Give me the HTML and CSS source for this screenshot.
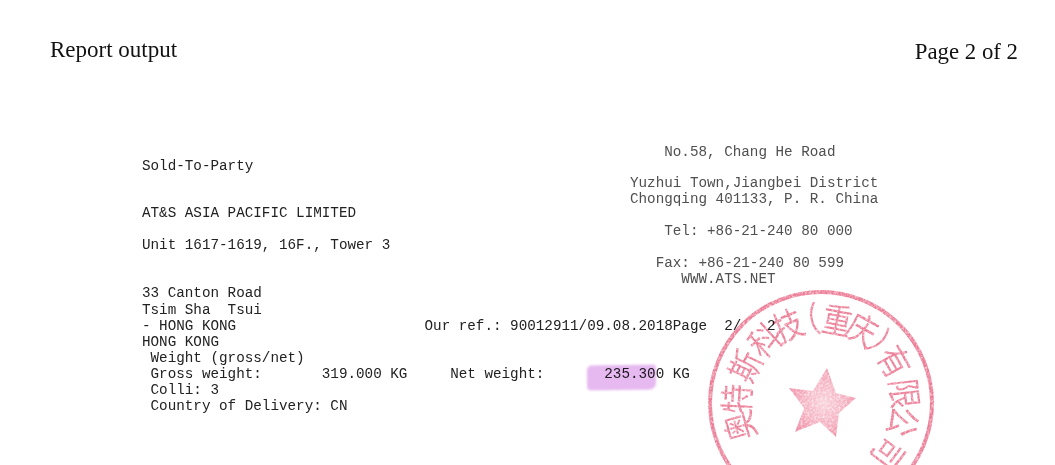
FILE: index.html
```html
<!DOCTYPE html>
<html lang="en">
<head>
<meta charset="utf-8">
<title>Report output</title>
<link rel="stylesheet" href="styles.css">
</head>
<body>
<header class="page-head">
  <h1 class="title">Report output</h1>
  <div class="page-no">Page 2 of 2</div>
</header>
<main class="sheet">
  <div class="letter-top">
    <pre class="mono sender">

Sold-To-Party


AT&amp;S ASIA PACIFIC LIMITED

Unit 1617-1619, 16F., Tower 3</pre>
    <pre class="mono address">    No.58, Chang He Road

Yuzhui Town,Jiangbei District
Chongqing 401133, P. R. China

    Tel: +86-21-240 80 000

   Fax: +86-21-240 80 599
      WWW.ATS.NET</pre>
  </div>
  <pre class="mono details">33 Canton Road
Tsim Sha  Tsui
- HONG KONG                      Our ref.: 90012911/09.08.2018Page  2/   2
HONG KONG
 Weight (gross/net)
 Gross weight:       319.000 KG     Net weight:       <span class="marked">235.300</span> KG
 Colli: 3
 Country of Delivery: CN</pre>
  <svg class="stamp" viewBox="0 0 240 182" width="240" height="182" aria-hidden="true">
    <defs>
      <radialGradient id="starFill" cx="0.52" cy="0.5" r="0.55">
        <stop offset="0" stop-color="#f9d3dc"/>
        <stop offset="0.55" stop-color="#f5b4c3"/>
        <stop offset="1" stop-color="#ef8ea6"/>
      </radialGradient>
      <filter id="ink" x="-5%" y="-5%" width="110%" height="110%">
        <feTurbulence type="fractalNoise" baseFrequency="0.45" numOctaves="2" seed="4" result="noise"/>
        <feColorMatrix in="noise" type="matrix" values="0 0 0 0 1  0 0 0 0 1  0 0 0 0 1  1.5 0 0 0 -0.6" result="specks"/>
        <feComposite in="SourceGraphic" in2="specks" operator="out" result="worn"/>
        <feGaussianBlur in="worn" stdDeviation="0.55"/>
      </filter>
    </defs>
    <g filter="url(#ink)">
      <circle class="ring" cx="120" cy="120" r="111"/>
      <polygon class="star" points="126,85 135,110 155,115 138,130 135,154 119,139 94,149 103,125 88,105 112,108"/>
      <g class="stamp-text">
        <text transform="rotate(-106 120 120) translate(120 49) scale(.85 1)">奥</text>
        <text transform="rotate(-87 120 120) translate(120 49) scale(.85 1)">特</text>
        <text transform="rotate(-64 120 120) translate(120 49) scale(.85 1)">斯</text>
        <text transform="rotate(-42 120 120) translate(120 49) scale(.85 1)">科</text>
        <text transform="rotate(-23 120 120) translate(120 49) scale(.85 1)">技</text>
        <text transform="rotate(-11 120 120) translate(120 49) scale(.85 1)">（</text>
        <text transform="rotate(11 120 120) translate(120 49) scale(.85 1)">重</text>
        <text transform="rotate(29 120 120) translate(120 49) scale(.85 1)">庆</text>
        <text transform="rotate(49 120 120) translate(120 49) scale(.85 1)">）</text>
        <text transform="rotate(60.500 120 120) translate(120 49) scale(.85 1)">有</text>
        <text transform="rotate(83.500 120 120) translate(120 49) scale(.85 1)">限</text>
        <text transform="rotate(103 120 120) translate(120 49) scale(.85 1)">公</text>
        <text transform="rotate(127 120 120) translate(120 49) scale(.85 1)">司</text>
      </g>
    </g>
  </svg>
</main>
</body>
</html>
```
FILE: styles.css
```css
html, body {
  margin: 0;
  height: 465px;
  overflow: hidden;
  background: #fff;
}

.page-head {
  display: flex;
  justify-content: space-between;
  align-items: flex-start;
  padding: 36px 37px 0 50px;
  height: 107px;
  box-sizing: border-box;
  font-family: "Liberation Serif", "Times New Roman", serif;
  font-size: 23px;
  line-height: 27px;
  color: #111;
  filter: blur(0.3px);
}

.title {
  margin: 0;
  font: inherit;
}

.page-no {
  padding-top: 2px;
  font-size: 22.8px;
}

.sheet {
  position: relative;
  height: 322px;
  box-sizing: border-box;
  padding: 36px 0 0 142px;
}

.mono {
  margin: 0;
  font-family: "Liberation Mono", "Courier New", monospace;
  font-size: 14.28px;
  color: #222;
  filter: blur(0.35px);
}

.letter-top {
  display: flex;
  height: 142.4px;
}

.sender {
  width: 488px;
  line-height: 15.8px;
}

.address {
  padding-top: 1.5px;
  line-height: 15.9px;
  color: #505050;
}

.details {
  line-height: 16.15px;
}

.marked {
  position: relative;
}

.marked::before {
  content: "";
  position: absolute;
  left: -17px;
  top: -1px;
  width: 69px;
  height: 25px;
  background: #e6b9f0;
  border-radius: 5px 3px 7px 4px;
  mix-blend-mode: multiply;
  transform: rotate(-0.8deg);
  filter: blur(0.8px);
}

.stamp {
  position: absolute;
  left: 701px;
  top: 176px;
  mix-blend-mode: multiply;
}

.ring {
  fill: none;
  stroke: #ec7f98;
  stroke-width: 4;
}

.star {
  fill: url(#starFill);
}

.stamp-text {
  font-family: "Noto Sans CJK SC", sans-serif;
  font-size: 35px;
  font-weight: 400;
  text-anchor: middle;
  fill: #ec7f98;
}
```
